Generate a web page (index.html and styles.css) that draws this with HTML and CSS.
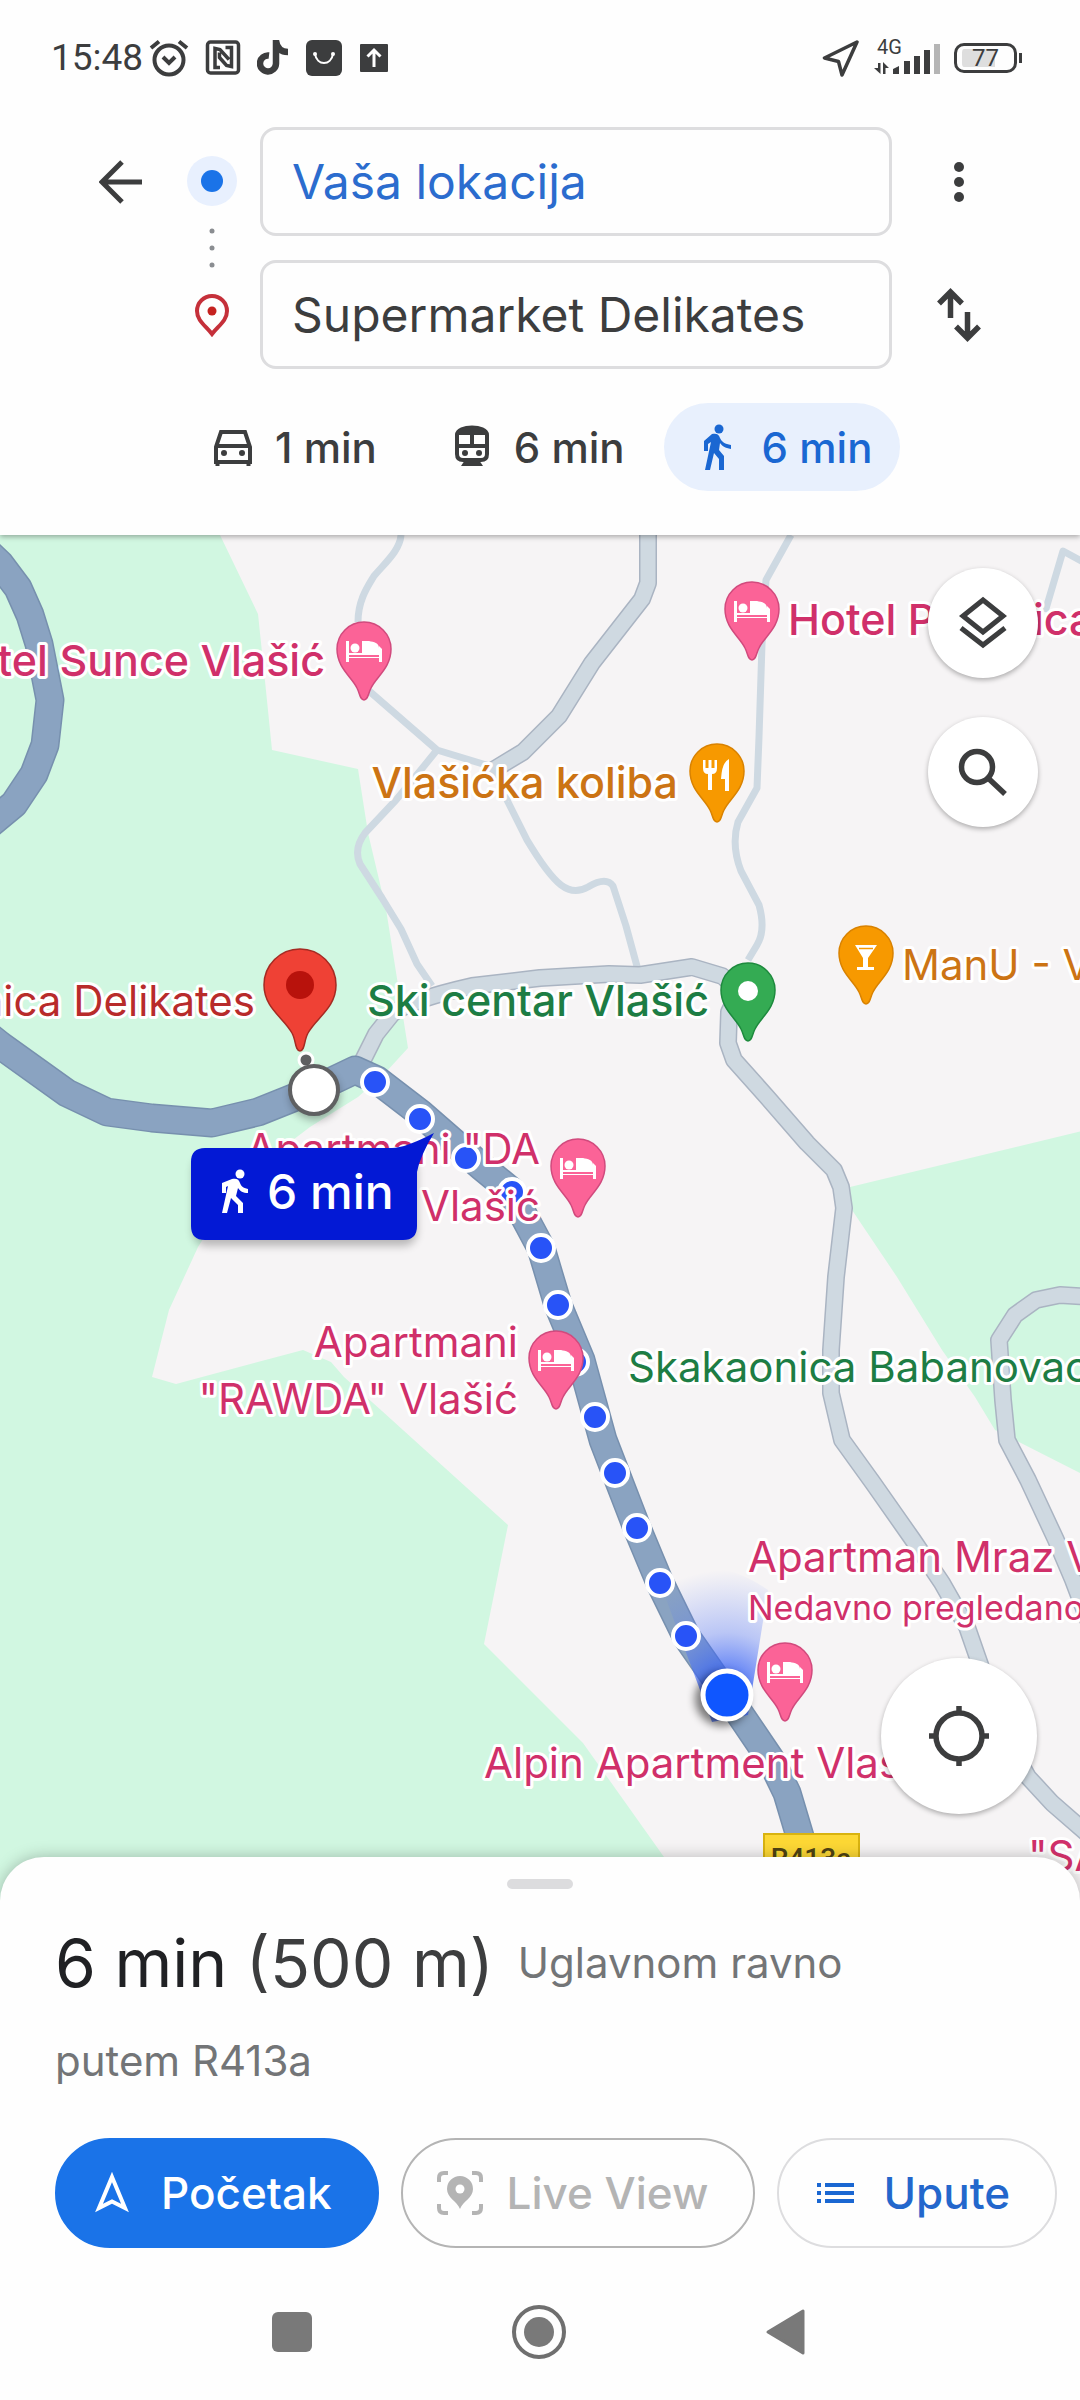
FILE: index.html
```html
<!DOCTYPE html>
<html lang="bs">
<head>
<meta charset="utf-8">
<meta name="viewport" content="width=device-width, initial-scale=1">
<title>Supermarket Delikates – 6 min</title>
<link rel="stylesheet" href="styles.css">
</head>
<body>
<div class="app">
  <header class="top">
    <div class="status">
      <time class="clock">15:48</time>
      <div class="status-left">
        <svg width="40" height="38" viewBox="0 0 40 38" fill="none" stroke="#3c3d3e" stroke-width="4"><circle cx="20" cy="21" r="14.5"/><path d="M2 9l8-6.500M38 9l-8-6.500M14 18l6 6 6-6"/></svg>
        <svg width="36" height="38" viewBox="0 0 36 38" fill="none" stroke="#3c3d3e" stroke-width="3.500"><rect x="2.500" y="3" width="31" height="31" rx="3"/><path d="M15 28.500H10V9.500l5 1 9 10M20.500 8.500h6v19l-5-1-7-8v-5"/></svg>
        <svg width="32" height="38" viewBox="0 0 32 38" fill="none" stroke="#3c3d3e" stroke-width="6.500"><path d="M19 1v23.500a8 8 0 1 1-7-8M19 2c1 7 5 11 12 11"/></svg>
        <svg width="38" height="38" viewBox="0 0 38 38"><rect x="1" y="1" width="36" height="36" rx="6" fill="#3c3d3e"/><path d="M10 15c2 12 16 12 18 0" fill="none" stroke="#fff" stroke-width="2"/><circle cx="10" cy="15" r="2" fill="#fff"/><circle cx="28" cy="15" r="2" fill="#fff"/></svg>
        <svg width="30" height="38" viewBox="0 0 30 38"><rect x="1" y="5" width="28" height="28" rx="1" fill="#3c3d3e"/><path d="M15 28V11M8.500 17.500L15 11l6.500 6.500" fill="none" stroke="#fff" stroke-width="3"/></svg>
      </div>
      <div class="status-right">
        <svg width="38" height="38" viewBox="0 0 38 38" fill="none" stroke="#3c3d3e" stroke-width="3.500" stroke-linejoin="round"><path d="M35 3L2.500 19l14 3.500L20 36z"/></svg>
        <div class="signal">
          <span class="net">4G</span>
          <svg width="66" height="36" viewBox="0 0 66 36" fill="#3c3d3e"><path d="M4 23h2.500v11L0 28h4zM9 34V22l6 6h-3.500v6zM19 34v-5l6-3v8zM30 21h6v13h-6zM40 16h6v18h-6zM50 10h6v24h-6z"/><path d="M60 4h6v30h-6z" fill="#b5b5b5"/></svg>
        </div>
        <div class="battery"><span>77</span></div>
      </div>
    </div>

    <form class="route">
      <button class="icon-btn back" type="button" aria-label="Nazad"><svg width="44" height="44" viewBox="0 0 44 44" fill="none" stroke="#3c3d3e" stroke-width="5"><path d="M43 22H4M23 2L3 22l20 20"/></svg></button>
      <div class="trail">
        <svg width="50" height="242" viewBox="0 0 50 242"><circle cx="25" cy="54" r="25" fill="#e8f0fe"/><circle cx="25" cy="54" r="11" fill="#1a73e8"/><g fill="#8a8d91"><circle cx="25" cy="104" r="2.500"/><circle cx="25" cy="121" r="2.500"/><circle cx="25" cy="138" r="2.500"/></g><path d="M25 207C19 199 10 194 10 184a15 15 0 0 1 30 0c0 10-9 15-15 23z" fill="none" stroke="#c5303a" stroke-width="4"/><circle cx="25" cy="184" r="4.500" fill="#c5221f"/></svg>
      </div>
      <div class="fields">
        <input class="field origin" type="text" value="Vaša lokacija" aria-label="Polazište">
        <input class="field" type="text" value="Supermarket Delikates" aria-label="Odredište">
      </div>
      <div class="side">
        <button class="icon-btn" type="button" aria-label="Više opcija"><svg width="44" height="56" viewBox="0 0 44 56" fill="#3c3d3e"><circle cx="22" cy="13" r="5"/><circle cx="22" cy="28" r="5"/><circle cx="22" cy="43" r="5"/></svg></button>
        <button class="icon-btn" type="button" aria-label="Zamijeni"><svg width="44" height="56" viewBox="0 0 44 56" fill="none" stroke="#3c3d3e" stroke-width="5.500"><path d="M13.500 31V5M2 16.500L13.500 5 25 16.500M30.500 25v26M19 39.500L30.500 51 42 39.500"/></svg></button>
      </div>
    </form>

    <nav class="modes" aria-label="Način putovanja">
      <button class="chip" type="button"><svg width="42" height="44" viewBox="0 0 42 44" fill="none" stroke="#3c3d3e" stroke-width="4"><path d="M4 22L9 7h24l5 15v15H4zM4 21h34M5.500 35v6M36.500 35v6"/><circle cx="12" cy="28" r="3" fill="#3c3d3e" stroke="none"/><circle cx="30" cy="28" r="3" fill="#3c3d3e" stroke="none"/></svg><span>1 min</span></button>
      <button class="chip" type="button"><svg width="42" height="44" viewBox="0 0 42 44" fill="none" stroke="#3c3d3e" stroke-width="4"><path d="M6 10C6 0 36 0 36 10v19c0 5-3 6-6 6H12c-3 0-6-1-6-6zM6 21h30M21 8v13"/><path d="M5 10C5-1 37-1 37 10z" fill="#3c3d3e" stroke="none"/><path d="M10 41l4-6h14l4 6z" fill="#3c3d3e" stroke="none"/><circle cx="14" cy="28" r="3" fill="#3c3d3e" stroke="none"/><circle cx="28" cy="28" r="3" fill="#3c3d3e" stroke="none"/></svg><span>6 min</span></button>
      <button class="chip active" type="button" aria-pressed="true"><svg width="42" height="46" viewBox="0 0 42 46" fill="#1a67d2"><circle cx="20" cy="5" r="4.500"/><path d="M13 10c4-1 7 0 8 4 2 4 5 6 11 7v4c-6-1-9-3-11-6l-1 7 5 6v14h-5V35l-5-6-4 17H6l6-28-3 2v7H5V17z"/></svg><span>6 min</span></button>
    </nav>
  </header>

  <main class="map">
    <svg class="canvas" viewBox="0 535 1080 1366" preserveAspectRatio="xMidYMin slice" role="img" aria-label="Karta">
      <defs>
        <radialGradient id="beam" gradientUnits="userSpaceOnUse" cx="727" cy="1695" r="125"><stop offset="0.150" stop-color="#2f5cf5" stop-opacity="0.800"/><stop offset="0.500" stop-color="#4a70f7" stop-opacity="0.350"/><stop offset="1" stop-color="#5b7cf8" stop-opacity="0"/></radialGradient>
        <filter id="soft" x="-50%" y="-50%" width="200%" height="200%"><feGaussianBlur stdDeviation="4"/></filter>
        <path id="pin" d="M0 51C-4 51-4 45-7 39C-12 28-27 19-27 0A27 27 0 1 1 27 0C27 19 12 28 7 39C4 45 4 51 0 51Z"/>
        <g id="bed"><path d="M-18-8h3V6h30V-1c0-5-5-6-10-7l-7 0V4h-13v4h33v5h-3V9h-30v4h-3z" fill="#fff"/><path d="M15 13h3V0l-3-3z" fill="#fff"/><circle cx="-9" cy="-1" r="4.500" fill="#fff"/></g>
      </defs>
      <rect y="535" width="1080" height="1400" fill="#f6f4f5"/>
      <g fill="#d1f7e1">
        <path d="M-10 535H220L258 614L265 681L272 750L358 769L368 833L386 909L408 1048L386 1072L358 1097L310 1127L240 1180L198 1247L169 1310L152 1377L176 1384L303 1350L331 1362L344 1377L382 1411L508 1525L484 1644L583 1743L664 1857L690 1935H-10z"/>
        <path d="M850 1187L1090 1129V1478L1015 1440L995 1430L975 1397L942 1350L897 1277L852 1210z"/>
      </g>
      <g class="lane">
        <path d="M401 535C400 550 386 562 374 576C368 586 358 600 358 622M368 690L437 750L496 768"/>
        <path d="M437 750L420 771L396 800L365 833C356 845 356 855 360 864L382 898L401 929L417 964L432 986"/>
        <path d="M494 770L508 802L527 840Q548 875 561 885Q574 895 588 887Q606 876 613 886L626 926L638 970"/>
        <path d="M791 535L766 580L762 644L759 737L757 788L738 822Q731 845 741 871L759 905Q766 930 757 945L748 960"/>
        <path d="M1045 612L1063 551L1085 563"/>
      </g>
      <g class="road-edge">
        <path d="M648 530V583L642 599L592 663L559 716L523 752L490 772"/>
        <path d="M362 1062L376 1034L392 1014Q410 1000 472 986L540 978L609 974L640 975L692 967L722 976L740 990L729 1012L728 1043L734 1060L767 1097L807 1143L834 1170L841 1187L844 1208L836 1277L831 1350V1393L842 1440L873 1483L913 1540L942 1583L967 1627L983 1673L1007 1740L1028 1777L1052 1803L1090 1836"/>
        <path d="M1090 1297L1060 1295L1036 1300L1015 1315L999 1340L1003 1400L1007 1440L1028 1480L1056 1540L1073 1580L1090 1625"/>
      </g>
      <g class="road">
        <path d="M648 530V583L642 599L592 663L559 716L523 752L488 773"/>
        <path d="M362 1062L376 1034L392 1014Q410 1000 472 986L540 978L609 974L640 975L692 967L722 976L740 990L729 1012L728 1043L734 1060L767 1097L807 1143L834 1170L841 1187L844 1208L836 1277L831 1350V1393L842 1440L873 1483L913 1540L942 1583L967 1627L983 1673L1007 1740L1028 1777L1052 1803L1090 1836"/>
        <path d="M1090 1297L1060 1295L1036 1300L1015 1315L999 1340L1003 1400L1007 1440L1028 1480L1056 1540L1073 1580L1090 1625"/>
      </g>
      <g class="main-edge">
        <path d="M-20 545L0 564L18 588L30 615L39 644L50 700L45 745L34 774L14 804L-15 828"/>
        <path d="M-20 1029L0 1045L67 1093L107 1112L152 1118L212 1123L258 1112L313 1090L355 1070L377 1080L420 1113L482 1167L510 1190L541 1248L558 1305L581 1360L603 1440L637 1528L660 1583L686 1636L727 1695L771 1760L787 1793L810 1870"/>
      </g>
      <g class="main-road">
        <path d="M-20 545L0 564L18 588L30 615L39 644L50 700L45 745L34 774L14 804L-15 828"/>
        <path d="M-20 1029L0 1045L67 1093L107 1112L152 1118L212 1123L258 1112L313 1090L355 1070L377 1080L420 1113L482 1167L510 1190L541 1248L558 1305L581 1360L603 1440L637 1528L660 1583L686 1636L727 1695L771 1760L787 1793L810 1870"/>
      </g>
      <path d="M712 1722L660 1583Q710 1550 768 1590L748 1715z" fill="url(#beam)"/>
      <g class="step">
        <circle cx="375" cy="1082" r="13"/><circle cx="420" cy="1119" r="13"/><circle cx="466" cy="1158" r="13"/><circle cx="512" cy="1192" r="13"/><circle cx="541" cy="1248" r="13"/><circle cx="558" cy="1305" r="13"/><circle cx="575" cy="1362" r="13"/><circle cx="595" cy="1417" r="13"/><circle cx="615" cy="1473" r="13"/><circle cx="637" cy="1528" r="13"/><circle cx="660" cy="1583" r="13"/><circle cx="686" cy="1636" r="13"/>
      </g>
      <circle cx="306" cy="1060" r="7" fill="#5f6062" stroke="#fff" stroke-width="3"/>
      <circle cx="315" cy="1095" r="25" fill="#000" opacity="0.300" filter="url(#soft)"/>
      <circle cx="314" cy="1090" r="24" fill="#fff" stroke="#5f6062" stroke-width="4"/>
      <circle cx="722" cy="1699" r="27" fill="#000" opacity="0.500" filter="url(#soft)"/>
      <circle cx="727" cy="1695" r="24" fill="#0f56ff" stroke="#fff" stroke-width="5"/>

      <g fill="#fb6397" stroke="#d14a7d" stroke-width="1.500">
        <use href="#pin" x="364" y="649"/><use href="#pin" x="752" y="609"/><use href="#pin" x="578" y="1166"/><use href="#pin" x="556" y="1358"/><use href="#pin" x="785" y="1670"/>
      </g>
      <use href="#bed" x="364" y="649"/><use href="#bed" x="752" y="609"/><use href="#bed" x="578" y="1166"/><use href="#bed" x="556" y="1358"/><use href="#bed" x="785" y="1670"/>
      <g fill="#f79900" stroke="#d98200" stroke-width="1.500"><use href="#pin" x="717" y="771"/><use href="#pin" x="866" y="953"/></g>
      <path d="M703 760v8q0 6 5 6v16h4v-16q5 0 5-6v-8h-2.500v8h-3v-8h-3v8h-3v-8zM729 759q-7 3-8 20h4v12h4z" fill="#fff"/>
      <path d="M855 945h22l-9 13v9h6v3h-17v-3h6v-9z" fill="#fff"/><path d="M859 948.500h14" stroke="#f79900" stroke-width="1.500"/>
      <use href="#pin" x="748" y="990" fill="#34ab53" stroke="#1d8a3d" stroke-width="1.500"/><circle cx="748" cy="991" r="10" fill="#fff"/>
      <path d="M300 1051C295 1051 296 1040 292 1033C284 1018 264 1008 264 985A36 36 0 1 1 336 985C336 1008 316 1018 308 1033C304 1040 305 1051 300 1051Z" fill="#ef4135" stroke="#a52a22" stroke-width="1.500"/><circle cx="300" cy="985" r="14" fill="#b8120c"/>

      <g class="labels">
        <text class="strong pink" x="325" y="676" text-anchor="end">Hotel Sunce Vlašić</text>
        <text class="strong pink" x="788" y="635">Hotel Pahuljica</text>
        <text class="strong orange" x="678" y="798" text-anchor="end">Vlašićka koliba</text>
        <text class="orange" x="902" y="980">ManU - Vlašić</text>
        <text class="red" x="255" y="1016" text-anchor="end">Prodavnica Delikates</text>
        <text class="strong green" x="709" y="1016" text-anchor="end">Ski centar Vlašić</text>
        <text class="pink" x="540" y="1164" text-anchor="end">Apartmani "DA</text>
        <text class="pink" x="540" y="1221" text-anchor="end">Vlašić</text>
        <text class="pink" x="518" y="1357" text-anchor="end">Apartmani</text>
        <text class="pink" x="518" y="1414" text-anchor="end">"RAWDA" Vlašić</text>
        <text class="green" x="628" y="1382">Skakaonica Babanovac</text>
        <text class="pink" x="748" y="1572">Apartman Mraz Vlašić</text>
        <text class="pink small" x="748" y="1620">Nedavno pregledano</text>
        <text class="pink" x="484" y="1778">Alpin Apartment Vlašić</text>
        <text class="pink" x="1028" y="1871">"SARA"</text>
      </g>
      <rect x="764" y="1834" width="95" height="44" fill="#fdd835" stroke="#d9b310" stroke-width="2"/>
      <text class="shield" x="811" y="1868" text-anchor="middle">R413a</text>

      <rect x="193" y="1156" width="224" height="90" rx="14" fill="#000" opacity="0.250" filter="url(#soft)"/>
      <path d="M205 1148H392Q405 1148 434 1133Q420 1156 417 1172V1226Q417 1240 403 1240H205Q191 1240 191 1226V1162Q191 1148 205 1148z" fill="#0319d5"/>
      <path d="M232 1179c4-1 7 0 8 4 1 3 3 5 8 6v4c-5 0-8-2-10-5l-2 8 7 7v10h-5v-8l-7-7-4 15h-5l6-27-2 1v6h-4v-10z" fill="#fff"/><circle cx="240" cy="1174" r="4.500" fill="#fff"/>
      <text class="tag" x="267" y="1209">6 min</text>
    </svg>
    <div class="controls">
      <button class="round" type="button" aria-label="Slojevi"><svg width="50" height="54" viewBox="0 0 50 54" fill="none" stroke="#3c3d3e" stroke-width="5"><path d="M25 4L45 20 25 36 5 20zM3 32l22 17 22-17"/></svg></button>
      <button class="round" type="button" aria-label="Pretraži"><svg width="50" height="54" viewBox="0 0 50 54" fill="none" stroke="#3c3d3e" stroke-width="5.500"><circle cx="19" cy="22" r="15.500"/><path d="M30 33l17 16"/></svg></button>
    </div>
    <button class="round locate" type="button" aria-label="Moja lokacija"><svg width="64" height="64" viewBox="0 0 64 64" fill="none" stroke="#3c3d3e" stroke-width="5.500"><circle cx="32" cy="32" r="23"/><path d="M32 2v9M32 53v9M2 32h9M53 32h9"/></svg></button>
  </main>

  <section class="sheet">
    <div class="handle"></div>
    <div class="summary">
      <h1 class="eta">6 min <span>(500 m)</span></h1>
      <p class="note">Uglavnom ravno</p>
    </div>
    <p class="via">putem R413a</p>
    <div class="actions">
      <button class="pill primary" type="button"><svg width="46" height="46" viewBox="0 0 46 46" fill="none" stroke="#fff" stroke-width="4"><path d="M21 7L34 38 21 31.500 8 38z"/></svg><span>Početak</span></button>
      <button class="pill disabled" type="button" disabled><svg width="46" height="46" viewBox="0 0 46 46" fill="none" stroke="#b4b4b4" stroke-width="4"><path d="M2 12V8q0-5 5-5h4M35 3h4q5 0 5 5v4M44 34v4q0 5-5 5h-4M11 43H7q-5 0-5-5v-4"/><path d="M23 39C20 31 10 28 10 19a13 13 0 0 1 26 0c0 9-10 12-13 20z" fill="#b4b4b4" stroke="none"/><circle cx="23" cy="19" r="4.500" fill="#fff" stroke="none"/></svg><span>Live View</span></button>
      <button class="pill" type="button"><svg width="46" height="46" viewBox="0 0 46 46" fill="#1a67d2"><path d="M4 13h4v4H4zM12 13h29v4H12zM4 21h4v4H4zM12 21h29v4H12zM4 29h4v4H4zM12 29h29v4H12z"/></svg><span>Upute</span></button>
    </div>
    <nav class="system" aria-label="Sistem">
      <button class="sys" type="button" aria-label="Nedavno"><svg width="56" height="56" viewBox="0 0 56 56"><rect x="8" y="8" width="40" height="40" rx="6" fill="#797979"/></svg></button>
      <button class="sys" type="button" aria-label="Početna"><svg width="56" height="56" viewBox="0 0 56 56"><circle cx="28" cy="28" r="25" fill="none" stroke="#6f6f6f" stroke-width="4"/><circle cx="28" cy="28" r="15" fill="#797979"/></svg></button>
      <button class="sys" type="button" aria-label="Nazad"><svg width="56" height="56" viewBox="0 0 56 56"><path d="M10 28L45 7v42z" fill="#797979" stroke="#797979" stroke-width="3" stroke-linejoin="round"/></svg></button>
    </nav>
  </section>
</div>
</body>
</html>
```
FILE: styles.css
```css
* { box-sizing: border-box; }
body { margin: 0; background: #fefefe; color: #3c3d3e; font-family: Inter, "Open Sans", sans-serif; }
button { border: 0; background: none; padding: 0; font: inherit; color: inherit; cursor: pointer; }
svg { display: block; flex: none; }
h1, p { margin: 0; font-weight: 400; }

.app { display: flex; flex-direction: column; min-height: 100vh; }

.top { position: relative; z-index: 1; background: #fefefe; box-shadow: 0 2px 5px rgba(0, 0, 0, 0.3); padding-bottom: 44px; }
.status { display: flex; align-items: center; height: 127px; padding: 0 63px 12px 51px; }
.clock { font-family: Roboto, sans-serif; font-size: 37px; line-height: 40px; }
.status-left { display: flex; align-items: center; gap: 16px; margin-left: 6px; }
.status-right { display: flex; align-items: center; gap: 14px; margin-left: auto; }
.signal { position: relative; }
.net { position: absolute; left: 3px; top: -4px; font-family: Roboto, sans-serif; font-size: 20px; line-height: 22px; }
.battery { position: relative; display: flex; align-items: center; justify-content: center; width: 63px; height: 30px; border: 3px solid #3c3d3e; border-radius: 10px; background: linear-gradient(90deg, #dedede 70%, #fefefe 70%) content-box; padding: 3px 5px; font-family: Roboto, sans-serif; font-size: 24px; line-height: 24px; }
.battery::after { content: ""; position: absolute; right: -8px; top: 7px; width: 3px; height: 10px; background: #3c3d3e; }

.route { display: grid; grid-template-columns: 187px 50px minmax(0, 1fr) 134px; padding-right: 54px; }
.icon-btn { display: flex; align-items: center; justify-content: center; height: 109px; }
.back { width: 44px; margin-left: 99px; }
.fields { display: grid; gap: 24px; margin-left: 23px; }
.field { width: 100%; height: 109px; border: 3px solid #dddddf; border-radius: 16px; padding: 0 29px; background: #fefefe; color: #3c3d3e; font-family: inherit; font-size: 48px; }
.origin { color: #2b6cce; }
.side { display: grid; gap: 24px; justify-items: center; }

.modes { display: flex; gap: 11px; margin: 34px 0 0 177px; }
.chip { display: flex; align-items: center; gap: 21px; height: 88px; padding: 0 28px 0 35px; border-radius: 44px; font-size: 42px; font-weight: 500; white-space: nowrap; }
.active { background: #e8f0fd; color: #1a67d2; }

.map { position: relative; flex: 1; min-height: 600px; margin-bottom: -44px; overflow: hidden; }
.canvas { position: absolute; inset: 0; width: 100%; height: 100%; }
.lane { fill: none; stroke: #ced9e2; stroke-width: 7; stroke-linejoin: round; }
.road, .road-edge, .main-road, .main-edge { fill: none; stroke-linejoin: round; }
.road-edge { stroke: #aab4c2; stroke-width: 18; }
.road { stroke: #cfd9e1; stroke-width: 15; }
.main-edge { stroke: #7790ae; stroke-width: 29; }
.main-road { stroke: #8aa3c1; stroke-width: 26; }
.step { fill: #2853f7; stroke: #fff; stroke-width: 4; }
.labels { font-size: 42px; stroke: #fff; stroke-width: 6; stroke-linejoin: round; paint-order: stroke; }
.strong { font-size: 43px; font-weight: 500; }
.small { font-size: 34px; }
.pink { fill: #d0306a; }
.orange { fill: #cc7414; }
.green { fill: #1d7d44; }
.red { fill: #b82b2b; }
.shield { font-family: Roboto, sans-serif; font-size: 28px; font-weight: 500; fill: #4f4312; }
.tag { font-size: 48px; font-weight: 500; fill: #fff; }

.controls { position: absolute; top: 33px; right: 42px; display: grid; gap: 39px; }
.round { display: flex; align-items: center; justify-content: center; width: 110px; height: 110px; border-radius: 50%; background: #fff; box-shadow: 0 2px 5px rgba(0, 0, 0, 0.3); }
.locate { position: absolute; right: 43px; bottom: 87px; width: 156px; height: 156px; }

.sheet { position: relative; background: #fefefe; border-radius: 44px 44px 0 0; padding: 22px 23px 0 55px; box-shadow: 0 0 16px rgba(0, 0, 0, 0.25); }
.handle { width: 66px; height: 10px; margin: 0 auto; border-radius: 5px; background: #dcdcde; position: relative; left: -16px; }
.summary { display: flex; align-items: center; gap: 24px; margin-top: 30px; }
.eta { font-size: 66px; line-height: 88px; color: #202124; white-space: nowrap; }
.eta span { color: #3c3d3e; }
.note, .via { font-size: 42px; line-height: 56px; color: #737577; }
.via { margin-top: 26px; }
.actions { display: flex; gap: 22px; margin-top: 49px; }
.pill { display: flex; align-items: center; justify-content: center; gap: 24px; height: 110px; border: 2px solid #dddddf; border-radius: 55px; font-size: 44px; font-weight: 500; color: #2367cc; white-space: nowrap; padding: 0 45px 0 34px; }
.primary { background: #1a73e8; border-color: #1a73e8; color: #fff; }
.disabled { border-color: #b4b4b4; color: #b4b4b4; }
.system { display: flex; justify-content: space-between; padding: 56px 243px 40px 209px; }
```
